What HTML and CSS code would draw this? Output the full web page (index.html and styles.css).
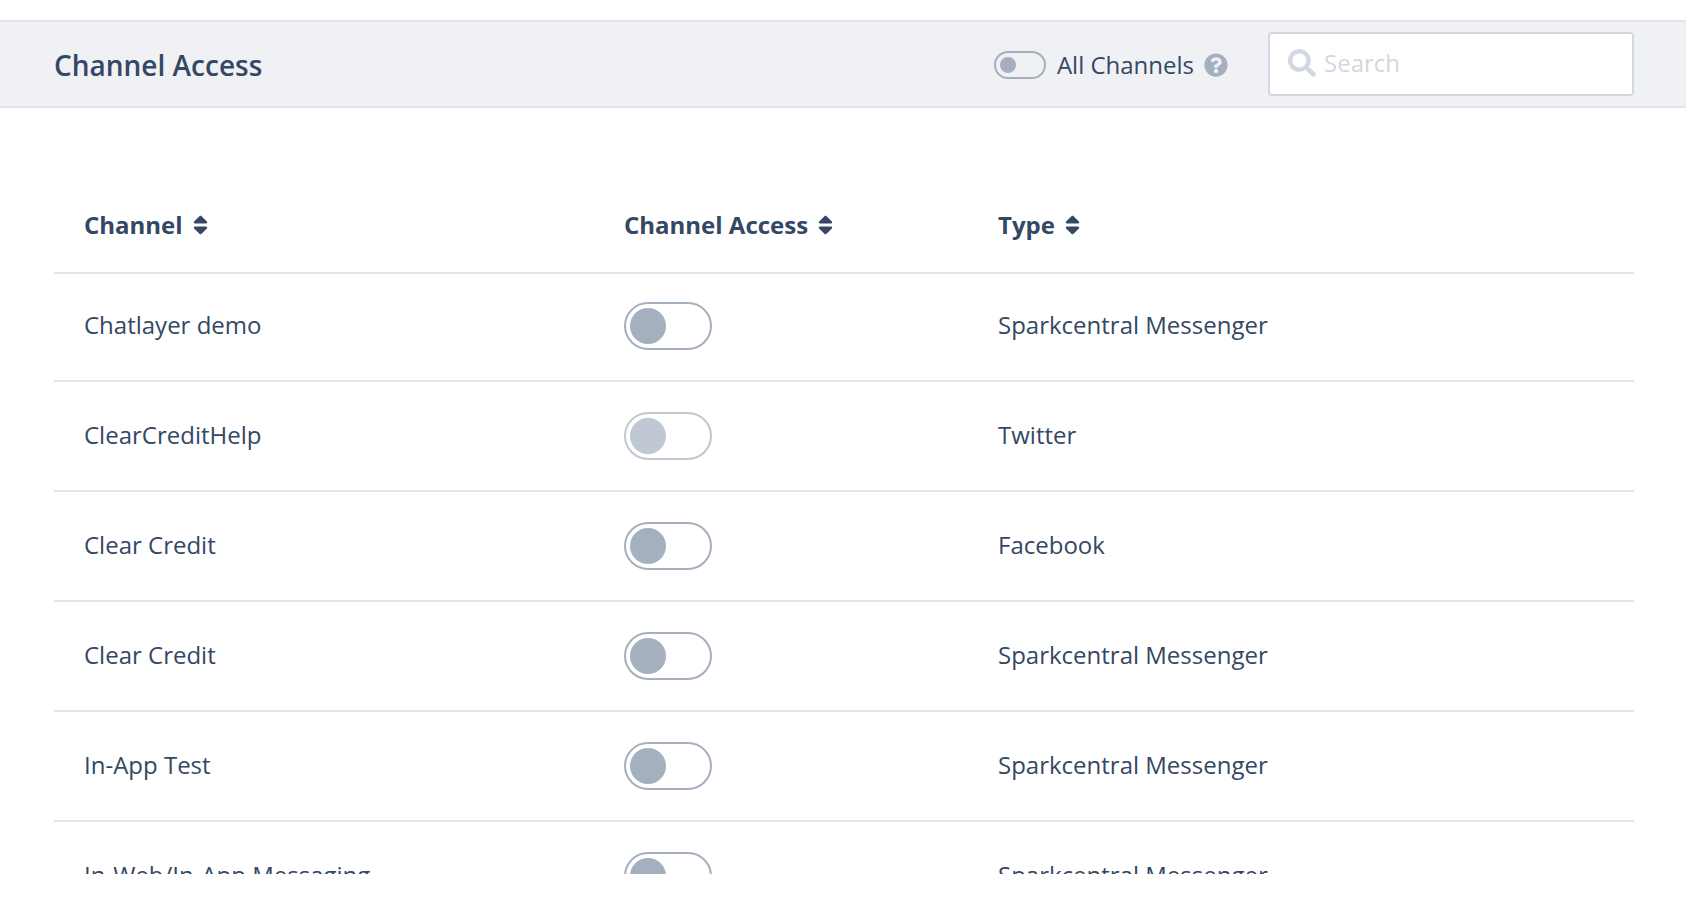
FILE: index.html
```html
<!DOCTYPE html>
<html lang="en">
<head>
<meta charset="utf-8">
<meta name="viewport" content="width=device-width, initial-scale=1">
<title>Channel Access</title>
<link rel="stylesheet" href="styles.css">
</head>
<body>
<svg class="sprite" aria-hidden="true">
  <symbol id="sort" viewBox="0 0 320 512"><path d="M41 288h238c21.400 0 32.100 25.900 17 41L177 448c-9.400 9.400-24.600 9.400-33.900 0L24 329c-15.100-15.100-4.400-41 17-41zm255-105L177 64c-9.400-9.400-24.600-9.400-33.900 0L24 183c-15.100 15.100-4.400 41 17 41h238c21.400 0 32.100-25.900 17-41z"/></symbol>
</svg>
<header class="bar">
  <h1 class="bar-title">Channel Access</h1>
  <div class="bar-all">
    <label class="bar-label"><input class="toggle toggle-small" type="checkbox" role="switch">All Channels</label>
    <button class="help" type="button" aria-label="Help">
      <svg class="help-icon" viewBox="0 0 512 512" aria-hidden="true"><path d="M504 256c0 136.997-111.043 248-248 248S8 392.997 8 256C8 119.083 119.043 8 256 8s248 111.083 248 248zM262.655 90c-54.497 0-89.255 22.957-116.549 63.758-3.536 5.286-2.353 12.415 2.715 16.258l34.699 26.310c5.205 3.947 12.621 3.008 16.665-2.122 17.864-22.658 30.113-35.797 57.303-35.797 20.429 0 45.698 13.148 45.698 32.958 0 14.976-12.363 22.667-32.534 33.976C247.128 238.528 216 254.941 216 296v4c0 6.627 5.373 12 12 12h56c6.627 0 12-5.373 12-12v-1.333c0-28.462 83.186-29.647 83.186-106.667 0-58.002-60.165-102-116.531-102zM256 338c-25.365 0-46 20.635-46 46 0 25.364 20.635 46 46 46s46-20.636 46-46c0-25.365-20.635-46-46-46z"/></svg>
    </button>
  </div>
  <label class="search">
    <svg class="search-icon" viewBox="0 0 512 512" aria-hidden="true"><path d="M505 442.700L405.300 343c-4.500-4.500-10.600-7-17-7H372c27.600-35.300 44-79.700 44-128C416 93.100 322.900 0 208 0S0 93.100 0 208s93.100 208 208 208c48.300 0 92.700-16.400 128-44v16.300c0 6.400 2.500 12.500 7 17l99.700 99.700c9.400 9.400 24.600 9.400 33.900 0l28.300-28.300c9.400-9.400 9.400-24.600.1-34zM208 336c-70.700 0-128-57.200-128-128 0-70.700 57.200-128 128-128 70.700 0 128 57.200 128 128 0 70.700-57.200 128-128 128z"/></svg>
    <input class="search-input" type="text" placeholder="Search" aria-label="Search">
  </label>
</header>
<main class="content">
  <table class="channels">
    <colgroup><col class="col-channel"><col class="col-access"><col></colgroup>
    <thead>
      <tr>
        <th scope="col"><button class="sort" type="button">Channel<svg class="sort-icon" aria-hidden="true"><use href="#sort"/></svg></button></th>
        <th scope="col"><button class="sort" type="button">Channel Access<svg class="sort-icon" aria-hidden="true"><use href="#sort"/></svg></button></th>
        <th scope="col"><button class="sort" type="button">Type<svg class="sort-icon" aria-hidden="true"><use href="#sort"/></svg></button></th>
      </tr>
    </thead>
    <tbody>
      <tr><td><label for="c1">Chatlayer demo</label></td><td><input class="toggle" id="c1" type="checkbox" role="switch"></td><td>Sparkcentral Messenger</td></tr>
      <tr><td><label for="c2">ClearCreditHelp</label></td><td><input class="toggle" id="c2" type="checkbox" role="switch" disabled></td><td>Twitter</td></tr>
      <tr><td><label for="c3">Clear Credit</label></td><td><input class="toggle" id="c3" type="checkbox" role="switch"></td><td>Facebook</td></tr>
      <tr><td><label for="c4">Clear Credit</label></td><td><input class="toggle" id="c4" type="checkbox" role="switch"></td><td>Sparkcentral Messenger</td></tr>
      <tr><td><label for="c5">In-App Test</label></td><td><input class="toggle" id="c5" type="checkbox" role="switch"></td><td>Sparkcentral Messenger</td></tr>
      <tr><td><label for="c6">In-Web/In-App Messaging</label></td><td><input class="toggle" id="c6" type="checkbox" role="switch"></td><td>Sparkcentral Messenger</td></tr>
    </tbody>
  </table>
</main>
</body>
</html>
```
FILE: styles.css
```css
*, *::before, *::after { box-sizing: border-box; }

body {
  display: flex;
  flex-direction: column;
  height: 100vh;
  margin: 0;
  padding: 20px 0 38px;
  background: #fff;
  color: #344864;
  font: 24px/32px "Open Sans", "Noto Sans", sans-serif;
}

button, input { font: inherit; color: inherit; }

button {
  padding: 0;
  border: 0;
  background: none;
  cursor: pointer;
}

.sprite { position: absolute; width: 0; height: 0; }

.bar {
  display: flex;
  flex: none;
  align-items: center;
  padding: 10px 52px 10px 54px;
  border: solid #e1e5eb;
  border-width: 2px 0;
  background: #f0f1f5;
}

.bar-title {
  margin: 2px auto 0 0;
  font-size: 28px;
  font-weight: 600;
}

.bar-all {
  display: flex;
  align-items: center;
  gap: 10px;
  margin: 2px 40px 0 0;
}

.bar-label { display: flex; align-items: center; gap: 11px; }

.help { display: flex; }

.help-icon {
  width: 24px;
  height: 24px;
  fill: #a5b0bf;
}

.search {
  display: flex;
  align-items: center;
  gap: 8px;
  width: 366px;
  height: 64px;
  padding: 0 18px 2px;
  border: 2px solid #d1d8e2;
  border-radius: 4px;
  background: #fff;
}

.search-icon {
  flex: none;
  width: 28px;
  height: 28px;
  fill: #d1d8e2;
}

.search-input {
  flex: 1;
  min-width: 0;
  padding: 0;
  border: 0;
  outline: 0;
  background: none;
}

.search-input::placeholder { color: #d1d8e2; opacity: 1; }

.toggle {
  display: block;
  width: 88px;
  height: 48px;
  margin: 0;
  padding: 4px;
  border: 2px solid #a5b0bf;
  border-radius: 24px;
  appearance: none;
  cursor: pointer;
}

.toggle::before {
  content: "";
  display: block;
  width: 36px;
  height: 36px;
  border-radius: 50%;
  background: #a5b0bf;
}

.toggle:checked::before { margin-left: auto; }

.toggle:disabled { opacity: 0.7; cursor: default; }

.toggle-small { width: 52px; height: 28px; }

.toggle-small::before { width: 16px; height: 16px; }

.content {
  flex: 1;
  min-height: 0;
  padding: 78px 52px 0 54px;
  overflow: hidden;
}

.channels {
  width: 100%;
  border-spacing: 0;
  table-layout: fixed;
}

.col-channel { width: 570px; }
.col-access { width: 374px; }

.channels th, .channels td {
  padding: 30px 0;
  border-bottom: 2px solid #e1e5eb;
  text-align: left;
  vertical-align: top;
}

.channels td { line-height: 46px; }

.channels th { padding: 23px 0 31px; }

.channels th:first-child, .channels td:first-child { padding-left: 30px; }

.channels tbody tr:first-child td { padding-top: 28px; }

.sort {
  display: flex;
  align-items: center;
  gap: 10px;
  font-weight: 700;
}

.sort-icon {
  width: 15px;
  height: 24px;
  fill: currentColor;
}
```
